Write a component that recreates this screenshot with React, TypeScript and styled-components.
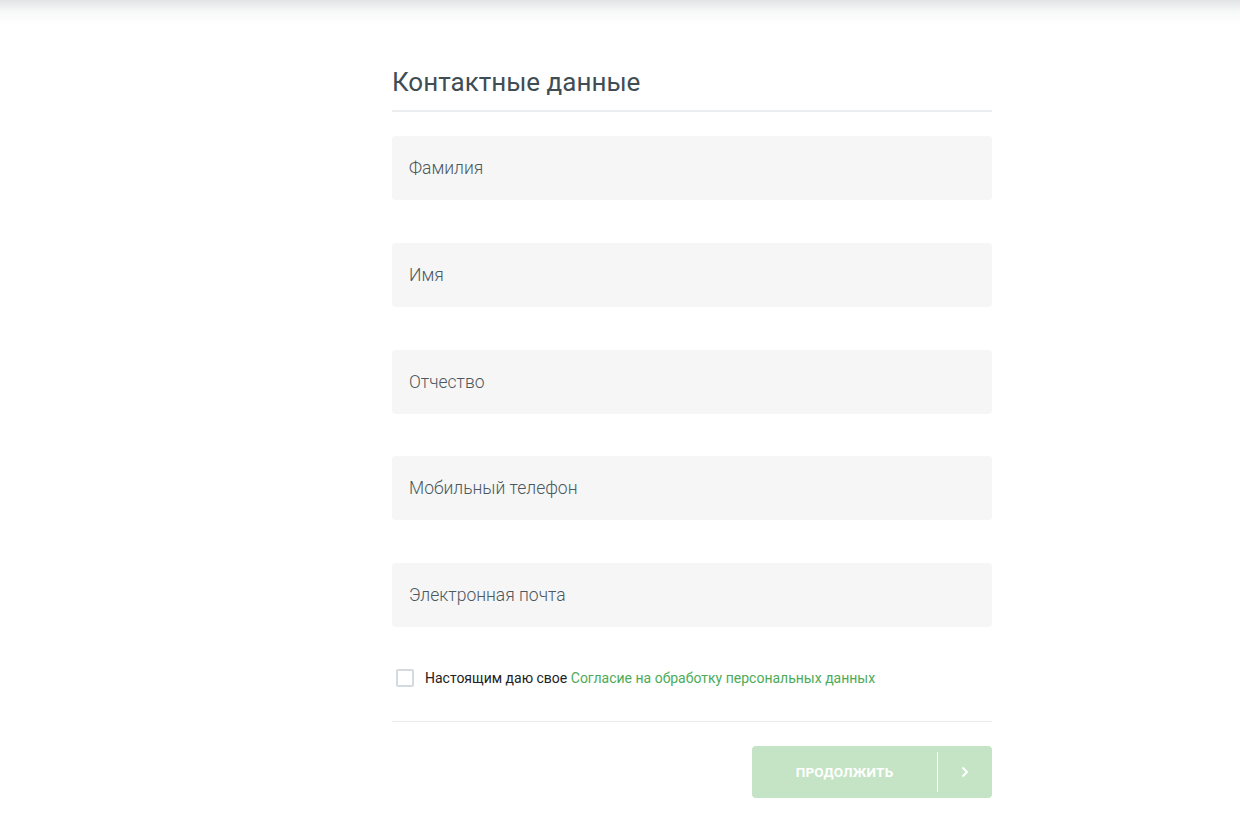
import styled, { createGlobalStyle } from "styled-components";

const GlobalStyle = createGlobalStyle`
  html, body {
    margin: 0;
    padding: 0;
    background: #ffffff;
    font-family: Roboto, "Noto Sans", sans-serif;
  }
`;

const TopShade = styled.div`
  height: 24px;
  background: linear-gradient(to bottom, #e1e4e5 0%, #f6f7f7 45%, #ffffff 100%);
`;

const Page = styled.div`
  display: flex;
  padding: 41px 0 26px 392px;
`;

const Form = styled.form`
  width: 600px;
  display: flex;
  flex-direction: column;
`;

const Title = styled.h2`
  margin: 0;
  padding-bottom: 11px;
  font-size: 26px;
  font-weight: 400;
  line-height: 34px;
  color: #404d55;
  border-bottom: 2px solid #e9edf0;
`;

const Fields = styled.div`
  display: flex;
  flex-direction: column;
  gap: 42.75px;
  margin-top: 24px;
`;

const Input = styled.input`
  box-sizing: border-box;
  width: 100%;
  height: 64px;
  padding: 0 17px;
  border: none;
  border-radius: 4px;
  background: #f6f6f6;
  font-family: Roboto, sans-serif;
  font-size: 17.5px;
  font-weight: 300;
  color: #333;
  outline: none;
  &::placeholder {
    color: #4b5860;
  }
`;

const Consent = styled.label`
  display: flex;
  align-items: center;
  gap: 11px;
  margin-top: 42px;
  padding-bottom: 34px;
  font-size: 14px;
  color: #222222;
  border-bottom: 1px solid #ebebeb;
`;

const Box = styled.span`
  box-sizing: border-box;
  width: 18px;
  height: 18px;
  margin-left: 4px;
  border: 2px solid #d4dbe0;
  border-radius: 2px;
  background: #fff;
`;

const Link = styled.a`
  color: #4dab57;
  text-decoration: none;
`;

const Actions = styled.div`
  display: flex;
  justify-content: flex-end;
  margin-top: 24px;
`;

const Button = styled.button`
  display: flex;
  align-items: center;
  width: 240px;
  height: 52px;
  padding: 6px 0;
  border: none;
  border-radius: 4px;
  background: #c4e4c5;
  color: #ffffff;
  font-family: Roboto, sans-serif;
  cursor: default;
`;

const Label = styled.span`
  flex: 1;
  text-align: center;
  font-size: 13.5px;
  font-weight: 700;
  letter-spacing: 0.2px;
`;

const Arrow = styled.span`
  display: flex;
  align-items: center;
  justify-content: center;
  width: 54px;
  height: 100%;
  border-left: 1px solid #ffffff;
`;

const fields = [
  "Фамилия",
  "Имя",
  "Отчество",
  "Мобильный телефон",
  "Электронная почта",
];

function App() {
  return (
    <>
      <GlobalStyle />
      <TopShade />
      <Page>
        <Form onSubmit={(e) => e.preventDefault()}>
          <Title>Контактные данные</Title>
          <Fields>
            {fields.map((f) => (
              <Input key={f} placeholder={f} />
            ))}
          </Fields>
          <Consent>
            <Box />
            <span>
              Настоящим даю свое{" "}
              <Link href="#">Согласие на обработку персональных данных</Link>
            </span>
          </Consent>
          <Actions>
            <Button type="button">
              <Label>ПРОДОЛЖИТЬ</Label>
              <Arrow>
                <svg width="8" height="12" viewBox="0 0 8 12" fill="none">
                  <path d="M1.5 1.5L6 6l-4.5 4.5" stroke="#fff" strokeWidth="2" />
                </svg>
              </Arrow>
            </Button>
          </Actions>
        </Form>
      </Page>
    </>
  );
}

export default App;
